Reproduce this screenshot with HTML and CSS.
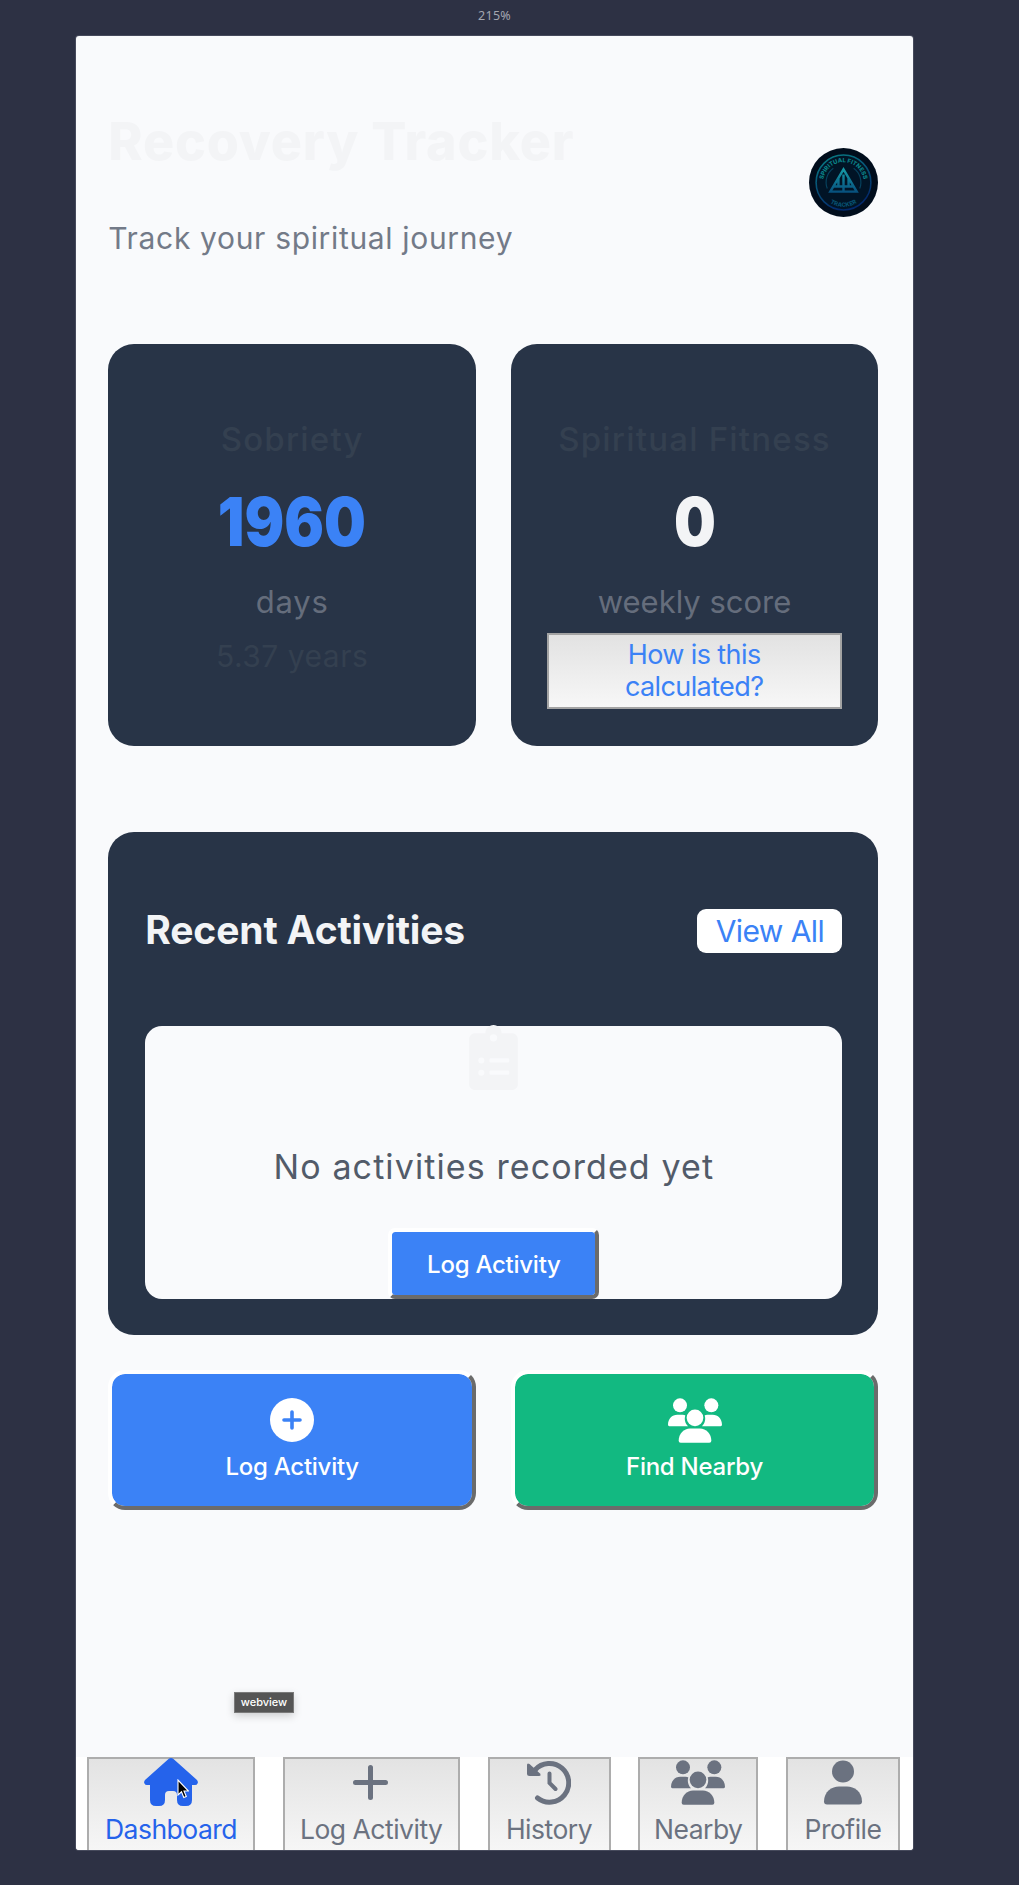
FILE: index.html
```html
<!DOCTYPE html>
<html lang="en">
<head>
<meta charset="utf-8">
<title>Recovery Tracker</title>
<link rel="stylesheet" href="styles.css">
</head>
<body>
<svg class="defs" aria-hidden="true">
  <symbol id="group" viewBox="0 0 162 134">
    <circle cx="36" cy="21.500" r="21"/><circle cx="130" cy="21.500" r="21"/><circle cx="81" cy="59" r="25"/>
    <path d="M0 80C0 62 12 50 28 50H44Q50 50 52 52C48 64 52 76 60 84H4Q0 84 0 80Z"/>
    <path d="M162 80C162 62 150 50 134 50H118Q112 50 110 52C114 64 110 76 102 84H158Q162 84 162 80Z"/>
    <path d="M32 128C32 106 48 91 66 91H96C114 91 130 106 130 128Q130 134 124 134H38Q32 134 32 128Z"/>
  </symbol>
</svg>
<div class="zoom-label">215%</div>
<div class="phone">
  <main class="screen">
    <header class="header">
      <div>
        <h1 class="title">Recovery Tracker</h1>
        <p class="subtitle">Track your spiritual journey</p>
      </div>
      <svg class="logo" viewBox="0 0 68 68">
        <defs>
          <linearGradient id="ring" x1="0" y1="0" x2="0.400" y2="1"><stop offset="0" stop-color="#087e83"/><stop offset="0.500" stop-color="#075478"/><stop offset="1" stop-color="#03296b"/></linearGradient>
          <linearGradient id="tri" x1="0" y1="0" x2="0" y2="1"><stop offset="0" stop-color="#1699a6"/><stop offset="1" stop-color="#07527f"/></linearGradient>
          <path id="arc-top" d="M14 34A20 20 0 0 1 54 34"/>
          <path id="arc-bottom" d="M10 34A24 24 0 0 0 58 34"/>
        </defs>
        <circle cx="34" cy="34" r="34" fill="#010d1c"/>
        <circle cx="34" cy="34" r="27" fill="#011426" stroke="url(#ring)" stroke-width="1.500"/>
        <path d="M18 40A17 17 0 0 1 24 20M50 40A17 17 0 0 0 44 20" fill="none" stroke="#06405c" stroke-width="1.200"/>
        <text class="logo-text" fill="#0a8288"><textPath href="#arc-top" startOffset="50%" text-anchor="middle">SPIRITUAL FITNESS</textPath></text>
        <text class="logo-text" fill="#07506f"><textPath href="#arc-bottom" startOffset="50%" text-anchor="middle">TRACKER</textPath></text>
        <path d="M34 21L47 43H21ZM29 30V38M34 26V43M39 30V38M24 38H44" fill="none" stroke="url(#tri)" stroke-width="2.400"/>
      </svg>
    </header>

    <section class="stats">
      <div class="card stat">
        <h2 class="stat-name">Sobriety</h2>
        <div class="stat-value blue">1960</div>
        <div class="stat-unit days">days</div>
        <div class="stat-years">5.37 years</div>
      </div>
      <div class="card stat">
        <h2 class="stat-name">Spiritual Fitness</h2>
        <div class="stat-value">0</div>
        <div class="stat-unit">weekly score</div>
        <button class="how">How is this<br>calculated?</button>
      </div>
    </section>

    <section class="card recent">
      <div class="recent-head">
        <h2 class="recent-title">Recent Activities</h2>
        <button class="view-all">View All</button>
      </div>
      <div class="empty">
        <svg class="clipboard" viewBox="0 0 384 512"><path fill="#f3f4f6" fill-rule="evenodd" d="M336 64h-80c0-35-29-64-64-64s-64 29-64 64H48C21 64 0 85 0 112v352c0 27 21 48 48 48h288c27 0 48-21 48-48V112c0-27-21-48-48-48ZM96 400a24 24 0 1 1 0-48 24 24 0 0 1 0 48Zm0-96a24 24 0 1 1 0-48 24 24 0 0 1 0 48ZM192 72a29 29 0 1 1 0 58 29 29 0 0 1 0-58Zm124 296v14q0 10-10 10H170q-10 0-10-10v-14q0-10 10-10h136q10 0 10 10Zm0-96v14q0 10-10 10H170q-10 0-10-10v-14q0-10 10-10h136q10 0 10 10Z"/></svg>
        <p class="empty-text">No activities recorded yet</p>
        <button class="raised log-small">Log Activity</button>
      </div>
    </section>

    <section class="actions">
      <button class="raised action">
        <svg class="action-icon" viewBox="0 0 44 44"><circle cx="22" cy="22" r="22" fill="#fff"/><path d="M22 14V30M14 22H30" stroke="#3b82f6" stroke-width="3.600" stroke-linecap="round"/></svg>
        <span>Log Activity</span>
      </button>
      <button class="raised action green">
        <svg class="action-icon group"><use href="#group"/></svg>
        <span>Find Nearby</span>
      </button>
    </section>
  </main>

  <nav class="nav">
    <button class="tab w-dash active">
      <svg class="home" viewBox="0 0 54 48"><path d="M24.500 1Q27 -1 29.500 1L53 22Q54.500 24 53.500 25.500Q53 27 51 27H48V42Q48 48 42 48H39Q33 48 33 42V37Q33 33 29 33H25Q21 33 21 37V42Q21 48 15 48H12Q6 48 6 42V27H3Q1 27 .5 25.500Q-.5 24 1 22Z"/></svg>
      <span>Dashboard</span>
    </button>
    <button class="tab w-log">
      <svg viewBox="0 0 44 44"><path d="M21.500 7V37M6.500 22H36.500" stroke="currentColor" stroke-width="5" stroke-linecap="round"/></svg>
      <span>Log Activity</span>
    </button>
    <button class="tab w-hist">
      <svg viewBox="0 0 44 44"><path d="M8 9.500A19.300 19.300 0 1 1 10.500 37.500" fill="none" stroke="currentColor" stroke-width="5" stroke-linecap="round"/><path d="M0 4.500Q0 2 2.500 3.500L13 13Q14.500 15.500 12 15.500H2.500Q0 15.500 0 13Z"/><path d="M22.500 13V22.500L28.500 28.500" fill="none" stroke="currentColor" stroke-width="4" stroke-linecap="round"/></svg>
      <span>History</span>
    </button>
    <button class="tab w-near">
      <svg class="group"><use href="#group"/></svg>
      <span>Nearby</span>
    </button>
    <button class="tab w-prof">
      <svg viewBox="0 0 44 44"><circle cx="22" cy="11" r="11"/><path d="M3 41C3 31 11 26 18 26H26C33 26 41 31 41 41Q41 44 38 44H6Q3 44 3 41Z"/></svg>
      <span>Profile</span>
    </button>
  </nav>
</div>
<div class="tooltip">webview</div>
<svg class="cursor" viewBox="0 0 12 20"><path d="M1 1V16L4.500 12.800L6.800 18.500L9.300 17.500L7 12H11.500Z" fill="#000" stroke="#fff" stroke-width="1.100"/></svg>
</body>
</html>
```

FILE: styles.css
```css
* { box-sizing: border-box; }
body {
  margin: 0;
  height: 1885px;
  overflow: hidden;
  background: #2d3144;
  font-family: Inter, "Liberation Sans", sans-serif;
}
h1, h2, p { margin: 0; }
button { font-family: inherit; margin: 0; padding: 0; }
.defs { position: absolute; width: 0; height: 0; }

.zoom-label {
  height: 36px;
  padding: 6px 0 0 478px;
  font: 12.500px/20px "Noto Sans", sans-serif;
  letter-spacing: 0.300px;
  color: #a3a6af;
}
.phone {
  width: 837px;
  height: 1814px;
  margin-left: 76px;
  border-radius: 3px;
  overflow: hidden;
  background: #f9fafc;
  box-shadow: 0 0 0 1px #464a5c;
  display: flex;
  flex-direction: column;
}
.screen {
  height: 1721px;
  flex: none;
  padding: 67px 34.600px 0 32.300px;
}

.header {
  height: 158px;
  display: flex;
  justify-content: space-between;
  align-items: center;
}
.title {
  font-size: 52px;
  line-height: 78px;
  font-weight: 800;
  letter-spacing: 0.800px;
  color: #f3f4f6;
}
.subtitle {
  margin-top: 34px;
  font-size: 30px;
  line-height: 46px;
  letter-spacing: 0.660px;
  color: #737a88;
}
.logo { width: 69px; height: 69px; }
.logo-text { font-size: 5.800px; font-weight: 800; }

.card {
  background: #283447;
  border-radius: 26px;
}
.stats {
  margin-top: 83px;
  display: grid;
  grid-template-columns: 1fr 1fr;
  gap: 34.600px;
}
.stat {
  height: 402px;
  padding: 70px 36px 0;
  text-align: center;
  white-space: nowrap;
}
.stat-name {
  font-size: 33px;
  line-height: 50px;
  font-weight: 500;
  letter-spacing: 1.200px;
  color: #344050;
}
.stat-value {
  margin-top: 18px;
  font-size: 67px;
  line-height: 80px;
  font-weight: 900;
  transform: scaleX(0.880);
  color: #f3f4f6;
}
.blue { color: #3b82f6; }
.stat-unit {
  margin-top: 17px;
  font-size: 31px;
  line-height: 46px;
  color: #656d7c;
}
.days { letter-spacing: 0.800px; }
.stat-years {
  margin-top: 8px;
  font-size: 30px;
  line-height: 46px;
  letter-spacing: 0.500px;
  color: #344050;
}
.how {
  display: block;
  width: 295px;
  height: 76px;
  margin: 8px 0 0;
  border: 2px solid #a3a3a3;
  background: linear-gradient(#e2e2e2, #f7f7f7);
  font-size: 27px;
  line-height: 32px;
  letter-spacing: -0.600px;
  color: #3b82f6;
}

.recent {
  height: 503px;
  margin-top: 86px;
  padding: 69px 36px 0 37px;
}
.recent-head {
  height: 60px;
  display: flex;
  justify-content: space-between;
  align-items: center;
}
.recent-title {
  font-size: 39px;
  line-height: 60px;
  margin-top: -2px;
  font-weight: 700;
  letter-spacing: -0.150px;
  color: #f3f4f6;
}
.view-all {
  width: 145px;
  height: 44px;
  border: 0;
  border-radius: 9px;
  background: #fff;
  font-size: 30px;
  line-height: 44px;
  letter-spacing: -0.600px;
  color: #3b82f6;
}
.empty {
  height: 273px;
  margin-top: 65px;
  border-radius: 17px;
  background: #f9fafc;
  display: flex;
  flex-direction: column;
  align-items: center;
}
.clipboard {
  flex: none;
  width: 49px;
  height: 65px;
  margin-top: -1px;
}
.empty-text {
  margin-top: 51px;
  font-size: 34px;
  line-height: 52px;
  letter-spacing: 1.100px;
  color: #525b69;
}
.raised {
  border: 4px solid;
  border-color: #fff #6b6b6b #6b6b6b #fff;
  background: #3b82f6;
  background-clip: padding-box;
  color: #fff;
  font-size: 24px;
  font-weight: 500;
  letter-spacing: -0.250px;
}
.log-small {
  width: 211px;
  height: 71px;
  margin-top: 35px;
  padding-top: 2px;
  border-radius: 7px;
}

.actions {
  margin-top: 35px;
  display: grid;
  grid-template-columns: 1fr 1fr;
  gap: 34.600px;
}
.action {
  height: 140px;
  padding-top: 24px;
  border-radius: 17px;
  display: flex;
  flex-direction: column;
  align-items: center;
  justify-content: flex-start;
  line-height: 30px;
}
.action.green { background-color: #12b981; }
.action-icon {
  width: 44px;
  height: 44px;
  margin-bottom: 10px;
}
.group { width: 54px; height: 45px; fill: currentColor; }
.action .group { margin-bottom: 9px; }

.nav {
  flex: none;
  height: 100px;
  padding: 0 13px 0 11px;
  background: #fff;
  display: flex;
  justify-content: space-between;
}
.tab {
  height: 100px;
  border: 2px solid #adadad;
  background: linear-gradient(#e3e3e3, #f7f7f7);
  display: flex;
  flex-direction: column;
  align-items: center;
  font-size: 26.500px;
  line-height: 34px;
  letter-spacing: -0.500px;
  color: #6b7280;
  white-space: nowrap;
}
.tab svg {
  flex: none;
  height: 45px;
  width: 44px;
  margin: 1px 0 7px;
  fill: currentColor;
}
.tab .group { width: 54px; }
.tab .home { width: 54px; height: 48px; margin: -1px 0 6px; }
.active { color: #2563eb; }
.w-dash { width: 168px; }
.w-log { width: 177px; }
.w-hist { width: 123px; }
.w-near { width: 120px; }
.w-prof { width: 114px; }

.tooltip {
  position: absolute;
  left: 234px;
  top: 1692px;
  width: 60px;
  height: 21px;
  border: 1px solid #7a7a7a;
  background: #555;
  box-shadow: 0 3px 8px rgba(0, 0, 0, 0.180);
  color: #fff;
  font-size: 11px;
  font-weight: 500;
  line-height: 19px;
  text-align: center;
}
.cursor {
  position: absolute;
  left: 177px;
  top: 1779px;
  width: 12px;
  height: 20px;
}
```
